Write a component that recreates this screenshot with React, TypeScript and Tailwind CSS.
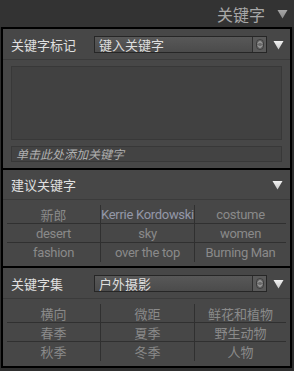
import React from "react";

const cjk = { fontFamily: '"Noto Sans CJK SC", "Noto Sans", sans-serif' };
const latin = { fontFamily: 'Roboto, "Noto Sans CJK SC", sans-serif' };

function Tri({ color = "#f2f2f2" }: { color?: string }) {
  return (
    <svg width="11" height="10" viewBox="0 0 11 10">
      <defs>
        <linearGradient id={"g" + color.replace("#", "")} x1="0" y1="0" x2="0" y2="1">
          <stop offset="0" stopColor={color} />
          <stop offset="1" stopColor={color} stopOpacity="0.75" />
        </linearGradient>
      </defs>
      <path d="M0.5 1 L10.5 1 L5.5 9.5 Z" fill={`url(#g${color.replace("#", "")})`} />
    </svg>
  );
}

function Select({ value }: { value: string }) {
  return (
    <div className="flex h-[17px] w-[173px] items-stretch border border-[#262626] bg-gradient-to-b from-[#585858] to-[#4b4b4b]">
      <div className="flex flex-1 items-center pl-[4px] text-[13px] leading-none text-[#dedede]" style={cjk}>
        {value}
      </div>
      <div className="flex w-[14px] items-center justify-center border-l border-[#2e2e2e] bg-[#5a5a5a]">
        <svg width="8" height="11" viewBox="0 0 8 11">
          <rect x="0.5" y="0.5" width="7" height="10" rx="3.5" fill="#6a6a6a" stroke="#3c3c3c" />
          <path d="M2 4.5 L4 2.5 L6 4.5" stroke="#bdbdbd" fill="none" strokeWidth="1" />
          <path d="M2 6.5 L4 8.5 L6 6.5" stroke="#bdbdbd" fill="none" strokeWidth="1" />
        </svg>
      </div>
    </div>
  );
}

function Grid({ items }: { items: { t: string; c?: string; l?: boolean }[][] }) {
  return (
    <div className="px-[4px]">
      {items.map((row, i) => (
        <div
          key={i}
          className={`grid h-[19px] grid-cols-[93px_94px_1fr] ${i < items.length - 1 ? "border-b border-[#303030]" : ""}`}
        >
          {row.map((cell, j) => (
            <div
              key={j}
              className={`flex items-center justify-center text-[13px] leading-none ${j > 0 ? "border-l border-[#303030]" : ""}`}
              style={{ ...(cell.l ? latin : cjk), color: cell.c ?? "#8a8a8a", letterSpacing: cell.l ? "-0.3px" : undefined }}
            >
              {cell.t}
            </div>
          ))}
        </div>
      ))}
    </div>
  );
}

export default function App() {
  return (
    <div className="flex h-[371px] w-[294px] flex-col bg-[#2e2e2e]" style={cjk}>
      <div className="flex h-[27px] items-center justify-end bg-[#333333] pr-[6px]">
        <span className="mr-[12px] text-[16px] leading-none text-[#a8a8a8]">关键字</span>
        <Tri color="#a6a6a6" />
      </div>
      <div className="ml-[1px] mr-[2px] flex h-[341px] flex-col border-2 border-black bg-[#474747]">
        {/* Section 1 */}
        <div className="flex flex-col pt-[7px]">
          <div className="flex h-[17px] items-center pl-[8px] pr-[6px]">
            <span className="w-[83px] text-[13px] leading-none text-[#e0e0e0]">关键字标记</span>
            <Select value="键入关键字" />
            <div className="ml-[6px] flex items-center">
              <Tri />
            </div>
          </div>
          <div className="mt-[6px] h-px bg-[#3b3b3b]" />
          <div className="mx-[8px] mt-[6px] h-[74px] border border-[#383838] bg-[#414141]" />
          <div className="mx-[8px] mt-[6px] flex h-[16px] items-center border border-[#383838] bg-[#434343] pl-[4px]">
            <span className="text-[12px] italic leading-none text-[#b0b0b0]">单击此处添加关键字</span>
          </div>
          <div className="h-[6px]" />
        </div>
        <div className="h-[2px] bg-black" />
        {/* Section 2 */}
        <div className="flex flex-col">
          <div className="flex h-[29px] items-center justify-between pl-[8px] pr-[7px]">
            <span className="text-[13px] leading-none text-[#e0e0e0]">建议关键字</span>
            <Tri />
          </div>
          <div className="h-px bg-[#3b3b3b]" />
          <div className="pt-[5px] pb-[4px]">
            <Grid
              items={[
                [{ t: "新郎" }, { t: "Kerrie Kordowski", c: "#9498a8", l: true }, { t: "costume", l: true }],
                [{ t: "desert", l: true }, { t: "sky", l: true }, { t: "women", l: true }],
                [{ t: "fashion", l: true }, { t: "over the top", l: true }, { t: "Burning Man", l: true }],
              ]}
            />
          </div>
        </div>
        <div className="h-[2px] bg-black" />
        {/* Section 3 */}
        <div className="flex flex-col pt-[7px]">
          <div className="flex h-[17px] items-center pl-[8px] pr-[6px]">
            <span className="w-[83px] text-[13px] leading-none text-[#e0e0e0]">关键字集</span>
            <Select value="户外摄影" />
            <div className="ml-[6px] flex items-center">
              <Tri />
            </div>
          </div>
          <div className="mt-[6px] h-px bg-[#3b3b3b]" />
          <div className="pt-[5px]">
            <Grid
              items={[
                [{ t: "横向" }, { t: "微距" }, { t: "鲜花和植物" }],
                [{ t: "春季" }, { t: "夏季" }, { t: "野生动物" }],
                [{ t: "秋季" }, { t: "冬季" }, { t: "人物" }],
              ]}
            />
          </div>
        </div>
      </div>
    </div>
  );
}
